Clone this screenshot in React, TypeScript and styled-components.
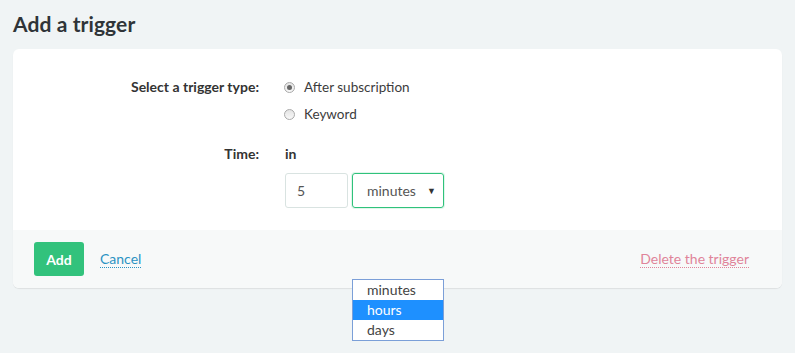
import React from "react";
import styled, { createGlobalStyle } from "styled-components";

const Global = createGlobalStyle`
  html, body { margin: 0; padding: 0; background: #f0f4f5; }
  body { font-family: "Lato", "Open Sans", sans-serif; color: #333; }
  * { box-sizing: border-box; }
`;

const Page = styled.div`
  padding: 0 13px;
  width: 795px;
  height: 353px;
`;

const Title = styled.h1`
  margin: 0;
  padding: 11px 0 0;
  height: 49px;
  font-size: 21px;
  font-weight: 700;
  color: #2f3438;
  letter-spacing: 0.1px;
`;

const Card = styled.div`
  background: #fff;
  border-radius: 6px;
  box-shadow: 0 1px 1px rgba(0, 0, 0, 0.08);
`;

const CardBody = styled.div`
  padding: 28px 0 22px;
  display: grid;
  grid-template-columns: 246px 1fr;
  column-gap: 26px;
  row-gap: 20px;
`;

const Label = styled.div`
  text-align: right;
  font-size: 14px;
  font-weight: 700;
  line-height: 20px;
  color: #333;
`;

const RadioGroup = styled.div`
  display: flex;
  flex-direction: column;
  gap: 7px;
`;

const RadioOption = styled.label`
  display: flex;
  align-items: center;
  height: 20px;
  gap: 9px;
  font-size: 13.5px;
  color: #3c3c3c;
  margin-left: -1px;
`;

const RadioCircle = styled.span<{ $checked?: boolean }>`
  width: 11px;
  height: 11px;
  border-radius: 50%;
  border: 1px solid #a9a9a9;
  background: linear-gradient(#e4e4e4, #f8f8f8);
  display: flex;
  align-items: center;
  justify-content: center;
  &::after {
    content: "";
    display: ${(p) => (p.$checked ? "block" : "none")};
    width: 5px;
    height: 5px;
    border-radius: 50%;
    background: #666;
  }
`;

const TimeBox = styled.div`
  display: flex;
  flex-direction: column;
`;

const InText = styled.div`
  font-size: 14px;
  font-weight: 700;
  line-height: 20px;
  color: #333;
`;

const Controls = styled.div`
  display: flex;
  gap: 4px;
  margin-top: 9px;
  position: relative;
`;

const NumberInput = styled.div`
  width: 63px;
  height: 35px;
  border: 1px solid #d9e3e1;
  border-radius: 3px;
  padding-left: 11px;
  display: flex;
  align-items: center;
  font-size: 14px;
  color: #555;
`;

const SelectBox = styled.div`
  width: 92px;
  height: 35px;
  border: 1px solid #2fc27b;
  border-radius: 3px;
  box-shadow: 0 0 0 1px rgba(47, 194, 123, 0.15);
  padding: 0 7px 0 14px;
  display: flex;
  align-items: center;
  justify-content: space-between;
  font-size: 14px;
  color: #555;
`;

const Arrow = styled.span`
  font-size: 9px;
  color: #333;
`;

const DropList = styled.ul`
  position: absolute;
  left: 67px;
  top: 106px;
  width: 92px;
  margin: 0;
  padding: 0;
  list-style: none;
  background: #fff;
  border: 1px solid #7b9fd8;
  z-index: 2;
`;

const DropItem = styled.li<{ $active?: boolean }>`
  height: 20px;
  line-height: 20px;
  padding-left: 14px;
  font-size: 14px;
  color: ${(p) => (p.$active ? "#fff" : "#444")};
  background: ${(p) => (p.$active ? "#1e90ff" : "transparent")};
`;

const Footer = styled.div`
  background: #f7f9f9;
  height: 58px;
  padding: 12px 33px 0 21px;
  display: flex;
  align-items: flex-start;
  border-radius: 0 0 6px 6px;
`;

const AddButton = styled.button`
  width: 50px;
  height: 34px;
  border: none;
  border-radius: 3px;
  background: #32c27c;
  color: #fff;
  font-family: inherit;
  font-size: 14px;
  font-weight: 700;
  padding: 0;
`;

const TextLink = styled.a<{ $color: string; $gap?: number }>`
  font-size: 14px;
  color: ${(p) => p.$color};
  text-decoration: none;
  border-bottom: 1px dotted ${(p) => p.$color};
  line-height: 16px;
  margin-top: 9px;
  margin-left: ${(p) => p.$gap ?? 0}px;
`;

const Spacer = styled.div`
  flex: 1;
`;

export default function App() {
  return (
    <>
      <Global />
      <Page>
        <Title>Add a trigger</Title>
        <Card>
          <CardBody>
            <Label>Select a trigger type:</Label>
            <RadioGroup>
              <RadioOption>
                <RadioCircle $checked />
                After subscription
              </RadioOption>
              <RadioOption>
                <RadioCircle />
                Keyword
              </RadioOption>
            </RadioGroup>
            <Label>Time:</Label>
            <TimeBox>
              <InText>in</InText>
              <Controls>
                <NumberInput>5</NumberInput>
                <SelectBox>
                  minutes
                  <Arrow>▼</Arrow>
                </SelectBox>
                <DropList>
                  <DropItem>minutes</DropItem>
                  <DropItem $active>hours</DropItem>
                  <DropItem>days</DropItem>
                </DropList>
              </Controls>
            </TimeBox>
          </CardBody>
          <Footer>
            <AddButton>Add</AddButton>
            <TextLink $color="#2b93c3" $gap={16}>
              Cancel
            </TextLink>
            <Spacer />
            <TextLink $color="#e0849a">Delete the trigger</TextLink>
          </Footer>
        </Card>
      </Page>
    </>
  );
}
